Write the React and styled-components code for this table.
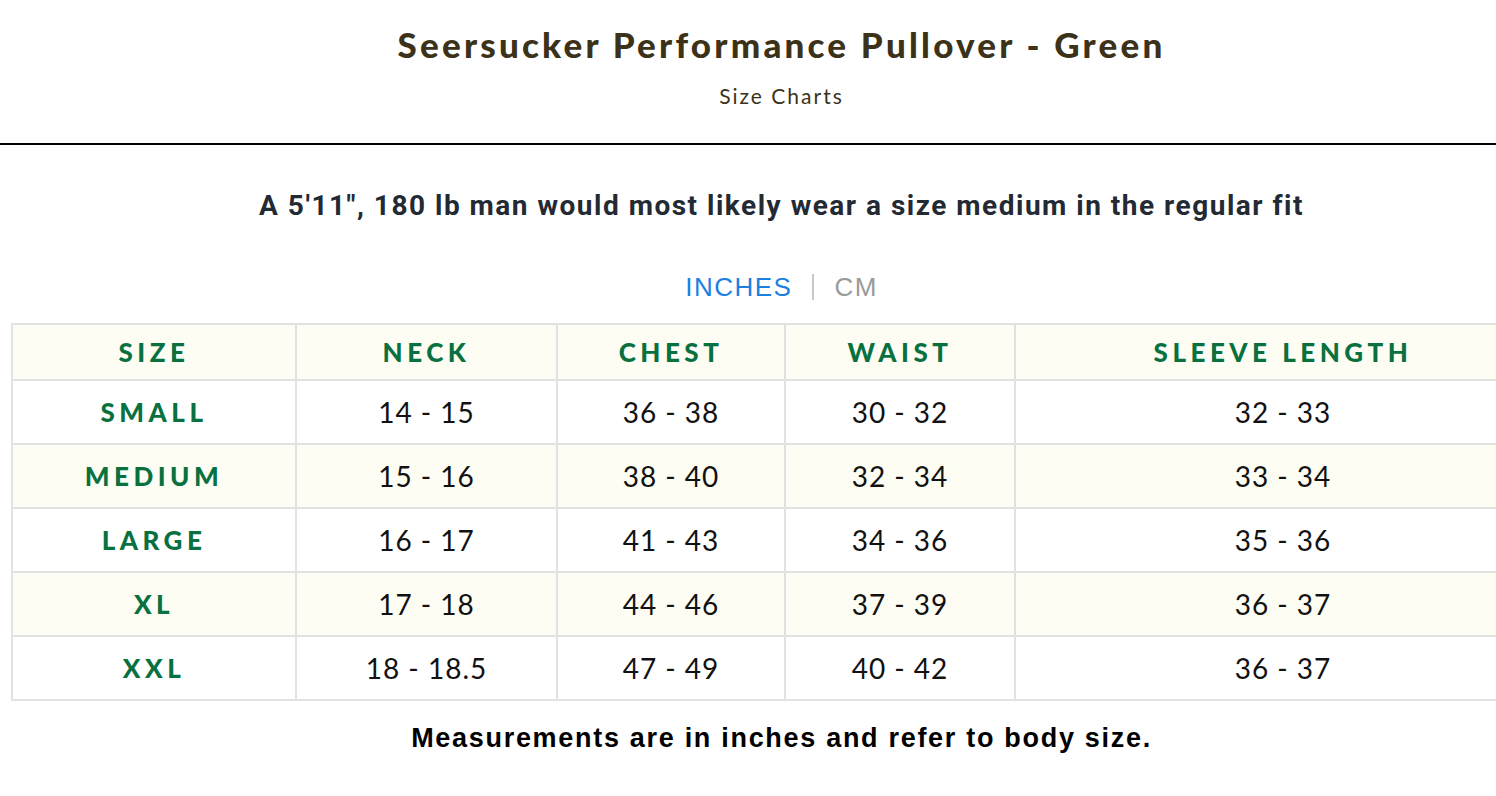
import React from 'react';
import styled, { createGlobalStyle } from 'styled-components';

const GlobalStyle = createGlobalStyle`
    html, body {
        margin: 0;
        padding: 0;
        background: #ffffff;
        overflow: hidden;
    }
`;

const Page = styled.main`
    width: 1563px;
    font-family: Lato, "Open Sans", sans-serif;
`;

const Header = styled.header`
    display: flex;
    flex-flow: column nowrap;
    align-items: center;
    padding-top: 24px;
    height: 119px;
    border-bottom: 2px solid #000000;
`;

const Title = styled.h1`
    margin: 0;
    font-family: Lato, sans-serif;
    font-weight: 900;
    font-size: 35px;
    letter-spacing: 3.2px;
    color: #3b3219;
    line-height: 40px;
`;

const Subtitle = styled.div`
    margin-top: 19px;
    font-family: Lato, sans-serif;
    font-size: 21px;
    letter-spacing: 2px;
    color: #3b3219;
`;

const Body = styled.section`
    display: flex;
    flex-flow: column nowrap;
    align-items: center;
    padding: 0 12px;
`;

const Advice = styled.p`
    margin: 45px 0 0 0;
    font-family: Roboto, sans-serif;
    font-weight: 700;
    font-size: 28px;
    letter-spacing: 1.5px;
    line-height: 32px;
    color: #232a33;
`;

const UnitSwitch = styled.div`
    display: flex;
    align-items: center;
    gap: 20px;
    margin-top: 49px;
    font-family: "Liberation Sans", Arial, sans-serif;
    font-size: 26px;
    letter-spacing: 1.5px;
    line-height: 32px;
`;

const Unit = styled.span`
    color: ${props => props.active ? '#1c7fe2' : '#9a9a9a'};
`;

const Divider = styled.span`
    width: 2px;
    height: 26px;
    background: #c8c8c8;
`;

const Table = styled.table`
    margin-top: 20px;
    width: 100%;
    border-collapse: collapse;
    table-layout: fixed;
`;

const Row = styled.tr`
    background: ${props => props.shaded ? '#fdfdf3' : '#ffffff'};
    height: ${props => props.head ? '56px' : '64px'};
`;

const HeadCell = styled.th`
    border: 2px solid #e2e2e2;
    text-align: center;
    font-family: Lato, sans-serif;
    font-weight: 900;
    font-size: 26px;
    letter-spacing: 4.5px;
    color: #08713f;
    padding: 0;
`;

const Cell = styled.td`
    border: 2px solid #e2e2e2;
    text-align: center;
    font-family: Lato, sans-serif;
    font-size: 28px;
    letter-spacing: 1px;
    color: #111111;
    padding: 0;
`;

const SizeCell = styled(HeadCell)``;

const Note = styled.p`
    margin: 22px 0 0 0;
    font-family: "Liberation Sans", Arial, sans-serif;
    font-weight: 700;
    font-size: 27px;
    letter-spacing: 1.7px;
    color: #000000;
`;

const columns = [
    { label: 'SIZE', width: 284 },
    { label: 'NECK', width: 261 },
    { label: 'CHEST', width: 228 },
    { label: 'WAIST', width: 230 },
    { label: 'SLEEVE LENGTH', width: 536 },
];

const rows = [
    ['SMALL', '14 - 15', '36 - 38', '30 - 32', '32 - 33'],
    ['MEDIUM', '15 - 16', '38 - 40', '32 - 34', '33 - 34'],
    ['LARGE', '16 - 17', '41 - 43', '34 - 36', '35 - 36'],
    ['XL', '17 - 18', '44 - 46', '37 - 39', '36 - 37'],
    ['XXL', '18 - 18.5', '47 - 49', '40 - 42', '36 - 37'],
];

const App = () => {
    return (
        <Page>
            <GlobalStyle />
            <Header>
                <Title>Seersucker Performance Pullover - Green</Title>
                <Subtitle>Size Charts</Subtitle>
            </Header>
            <Body>
                <Advice>A 5'11", 180 lb man would most likely wear a size medium in the regular fit</Advice>
                <UnitSwitch>
                    <Unit active>INCHES</Unit>
                    <Divider />
                    <Unit>CM</Unit>
                </UnitSwitch>
                <Table>
                    <colgroup>
                        {columns.map(c => <col key={c.label} style={{ width: c.width }} />)}
                    </colgroup>
                    <thead>
                        <Row head shaded>
                            {columns.map(c => <HeadCell key={c.label}>{c.label}</HeadCell>)}
                        </Row>
                    </thead>
                    <tbody>
                        {rows.map((r, i) => (
                            <Row key={r[0]} shaded={i % 2 === 1}>
                                <SizeCell as="td">{r[0]}</SizeCell>
                                {r.slice(1).map((v, j) => <Cell key={j}>{v}</Cell>)}
                            </Row>
                        ))}
                    </tbody>
                </Table>
                <Note>Measurements are in inches and refer to body size.</Note>
            </Body>
        </Page>
    );
};

export default App;
